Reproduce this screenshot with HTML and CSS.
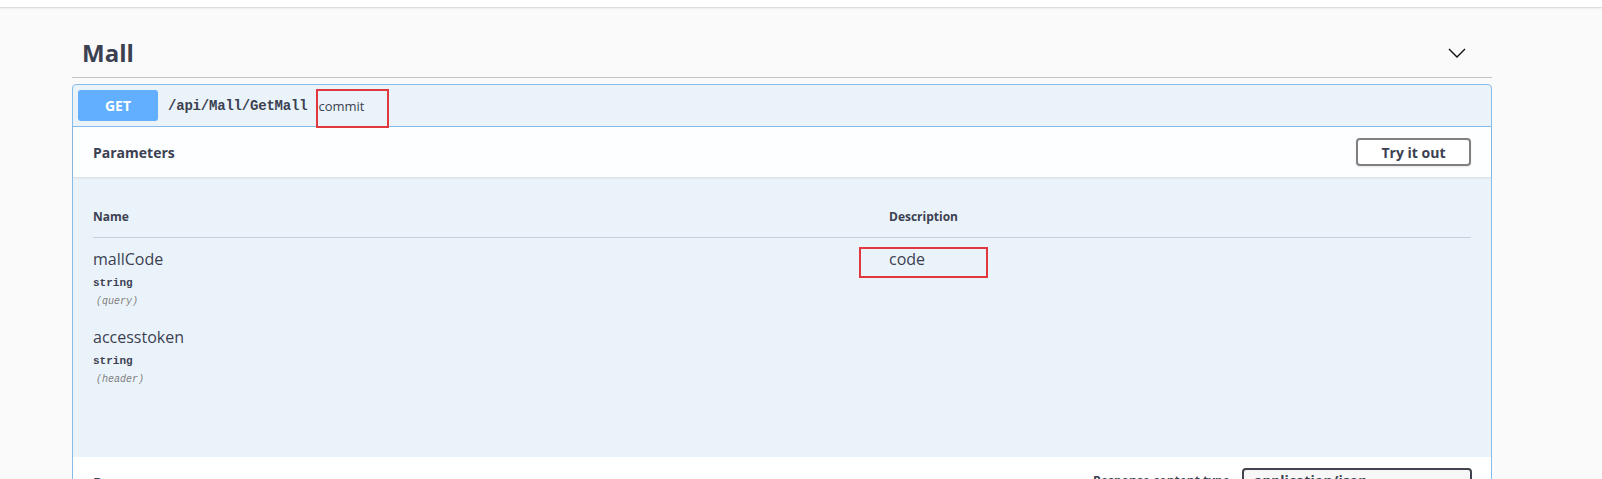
FILE: index.html
```html
<!DOCTYPE html>
<html lang="en">
<head>
<meta charset="utf-8">
<title>Mall</title>
<link rel="stylesheet" href="styles.css">
</head>
<body>
<div class="topbar"></div>
<div class="wrapper">
  <section class="tag">
    <div class="tag-header">
      <h3 class="tag-title">Mall</h3>
      <button class="expand" aria-label="collapse">
        <svg width="18" height="10" viewBox="0 0 18 10"><polyline points="1,1 9,9 17,1" fill="none" stroke="#111" stroke-width="1.4"/></svg>
      </button>
    </div>
    <div class="opblock">
      <div class="summary">
        <span class="method">GET</span>
        <span class="path">/api/Mall/GetMall</span>
        <span class="summary-desc">commit</span>
        <span class="mark mark-commit"></span>
      </div>
      <div class="section-header">
        <h4>Parameters</h4>
        <button class="try-out">Try it out</button>
      </div>
      <div class="table-container">
        <div class="params">
          <div class="row head">
            <div class="col-name">Name</div>
            <div class="col-desc">Description</div>
          </div>
          <div class="row param">
            <div class="col-name">
              <div class="param-name">mallCode</div>
              <div class="param-type">string</div>
              <div class="param-in">(query)</div>
            </div>
            <div class="col-desc">
              <div class="param-desc">code</div>
              <span class="mark mark-code"></span>
            </div>
          </div>
          <div class="row param">
            <div class="col-name">
              <div class="param-name">accesstoken</div>
              <div class="param-type">string</div>
              <div class="param-in">(header)</div>
            </div>
            <div class="col-desc"></div>
          </div>
        </div>
      </div>
      <div class="section-header responses">
        <h4>Responses</h4>
        <div class="content-type">
          <span class="ct-label">Response content type</span>
          <span class="select">application/json<span class="caret">&#8964;</span></span>
        </div>
      </div>
    </div>
  </section>
</div>
</body>
</html>
```
FILE: styles.css
```css
html, body {
  margin: 0;
  padding: 0;
  height: 479px;
  overflow: hidden;
}
body {
  background: #fafafa;
  font-family: "Open Sans", "Noto Sans", sans-serif;
  color: #3b4151;
}
.topbar {
  height: 7px;
  background: #fff;
  border-bottom: 1px solid #dedede;
  box-shadow: 0 1px 2px rgba(0,0,0,.05);
}
.wrapper {
  padding-left: 72px;
  width: 1420px;
}
.tag-header {
  display: flex;
  align-items: center;
  justify-content: space-between;
  padding: 29px 0 8px 0;
  border-bottom: 1px solid rgba(59,65,81,.3);
}
.tag-title {
  margin: 0;
  padding-left: 10px;
  font-size: 24px;
  line-height: 32px;
  font-weight: 700;
  color: #3b4151;
}
.expand {
  border: none;
  background: none;
  padding: 0;
  margin-right: 26px;
  display: flex;
}
.opblock {
  margin-top: 6px;
  border: 1px solid #86bce9;
  border-radius: 4px;
  background: #ebf3fa;
}
.summary {
  position: relative;
  display: flex;
  align-items: center;
  padding: 5px;
  border-bottom: 1px solid #86bce9;
}
.method {
  width: 80px;
  height: 31px;
  line-height: 31px;
  text-align: center;
  background: #61affe;
  color: #fff;
  font-weight: 700;
  font-size: 14px;
  border-radius: 3px;
}
.path {
  padding: 0 10px;
  font-family: "Liberation Mono", "DejaVu Sans Mono", monospace;
  font-weight: 700;
  font-size: 14px;
  letter-spacing: -0.2px;
  color: #3b4151;
}
.summary-desc {
  font-size: 13px;
  color: #3b4151;
  margin-left: 1px;
}
.mark {
  position: absolute;
  border: 2px solid #e0383e;
  box-sizing: border-box;
}
.mark-commit {
  left: 243px;
  top: 4px;
  width: 73px;
  height: 39px;
}
.section-header {
  display: flex;
  align-items: center;
  justify-content: space-between;
  min-height: 50px;
  padding: 0 20px;
  background: rgba(255,255,255,.85);
  box-shadow: 0 1px 2px rgba(0,0,0,.1);
}
.section-header h4 {
  margin: 0;
  font-size: 14px;
  font-weight: 700;
  color: #3b4151;
}
.try-out {
  width: 115px;
  height: 28px;
  border: 2px solid #808080;
  border-radius: 4px;
  background: #fff;
  font-family: "Open Sans", "Noto Sans", sans-serif;
  font-size: 14px;
  font-weight: 700;
  color: #3b4151;
  box-shadow: 0 1px 2px rgba(0,0,0,.1);
}
.table-container {
  padding: 20px 20px 63px 20px;
}
.row {
  display: grid;
  grid-template-columns: 796px 1fr;
}
.row.head {
  padding: 12px 0;
  line-height: 16px;
  font-size: 12px;
  font-weight: 700;
  border-bottom: 1px solid rgba(59,65,81,.2);
}
.row.param {
  padding: 10px 0 8px 0;
}
.col-desc {
  position: relative;
}
.param-name, .param-desc {
  font-size: 16px;
  line-height: 22px;
  color: #3b4151;
}
.param-type {
  margin-top: 6px;
  font-family: "Liberation Mono", "DejaVu Sans Mono", monospace;
  font-size: 11px;
  font-weight: 700;
  line-height: 14px;
  color: #3b4151;
}
.param-in {
  margin-top: 6px;
  padding-left: 3px;
  font-family: "Liberation Mono", "DejaVu Sans Mono", monospace;
  font-size: 10px;
  font-style: italic;
  line-height: 12px;
  color: #808080;
}
.mark-code {
  left: -30px;
  top: -1px;
  width: 129px;
  height: 31px;
}
.responses {
  box-shadow: none;
  background: #fff;
  align-items: flex-start;
}
.responses h4 {
  padding-top: 16px;
}
.content-type {
  display: flex;
  align-items: flex-start;
  padding-top: 11px;
}
.ct-label {
  width: 149px;
  font-size: 12px;
  font-weight: 700;
  padding-top: 4px;
}
.select {
  display: inline-flex;
  justify-content: space-between;
  width: 230px;
  height: 36px;
  box-sizing: border-box;
  padding: 1px 10px;
  border: 2px solid #41444e;
  border-radius: 4px;
  font-size: 14px;
  font-weight: 700;
  background: #f7f7f7;
  margin-right: -1px;
}
.caret {
  color: #888;
  font-weight: 400;
}
```
